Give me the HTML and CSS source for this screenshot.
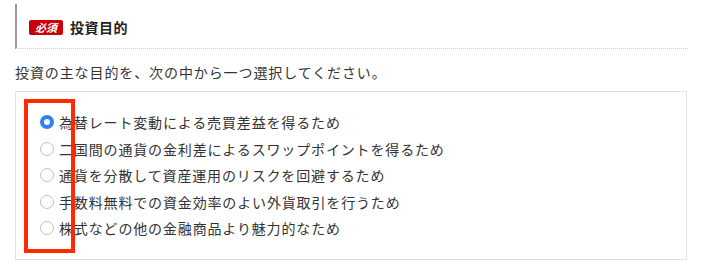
FILE: index.html
```html
<!DOCTYPE html>
<html lang="ja">
<head>
<meta charset="utf-8">
<link rel="stylesheet" href="styles.css">
</head>
<body>
<div class="page">
  <div class="heading">
    <span class="badge">必須</span>
    <span class="title">投資目的</span>
  </div>
  <p class="lead">投資の主な目的を、次の中から一つ選択してください。</p>
  <div class="box">
    <label class="row"><input type="radio" name="p" checked><span>為替レート変動による売買差益を得るため</span></label>
    <label class="row"><input type="radio" name="p"><span>二国間の通貨の金利差によるスワップポイントを得るため</span></label>
    <label class="row"><input type="radio" name="p"><span>通貨を分散して資産運用のリスクを回避するため</span></label>
    <label class="row"><input type="radio" name="p"><span>手数料無料での資金効率のよい外貨取引を行うため</span></label>
    <label class="row"><input type="radio" name="p"><span>株式などの他の金融商品より魅力的なため</span></label>
    <div class="mark"></div>
  </div>
</div>
</body>
</html>
```
FILE: styles.css
```css
html, body {
  margin: 0;
  padding: 0;
  background: #fff;
}
body {
  font-family: "Noto Sans CJK JP", "Noto Sans", sans-serif;
  color: #333;
}
.page {
  padding: 4px 22px 0 15px;
}
.heading {
  display: flex;
  align-items: center;
  height: 44px;
  border-left: 2px solid #9a9a9a;
  border-bottom: 1px dotted #cfcfcf;
  padding-left: 12px;
}
.badge {
  display: inline-flex;
  align-items: center;
  justify-content: center;
  width: 34px;
  height: 15px;
  background: #c8000a;
  color: #fff;
  font-size: 11px;
  font-weight: 700;
  font-style: italic;
  border-radius: 2px;
  margin-right: 7px;
  margin-top: 2px;
  line-height: 1;
}
.title {
  font-size: 14px;
  font-weight: 700;
  letter-spacing: 0.5px;
  color: #222;
  margin-top: 1px;
}
.lead {
  margin: 13px 0 0;
  font-size: 14px;
  letter-spacing: 0.9px;
  line-height: 20px;
  color: #333;
}
.box {
  position: relative;
  margin-top: 9px;
  width: 672px;
  border: 1px solid #e2e2e2;
  padding: 17px 0 17px 24px;
  box-sizing: border-box;
}
.row {
  display: flex;
  align-items: center;
  height: 26.5px;
  font-size: 14px;
  letter-spacing: 0.85px;
  color: #333;
}
.row input {
  -webkit-appearance: none;
  appearance: none;
  width: 14px;
  height: 14px;
  margin: 0 5px 0 0;
  border: 1px solid #c2c2c2;
  border-radius: 50%;
  background: #fff;
  box-sizing: border-box;
  flex: none;
}
.row input:checked {
  border: 4.5px solid #2f80f2;
  background: #fff;
}
.mark {
  position: absolute;
  left: 8px;
  top: 7px;
  width: 51px;
  height: 154px;
  border: 4px solid #ff2a00;
  box-sizing: border-box;
  pointer-events: none;
}
```
